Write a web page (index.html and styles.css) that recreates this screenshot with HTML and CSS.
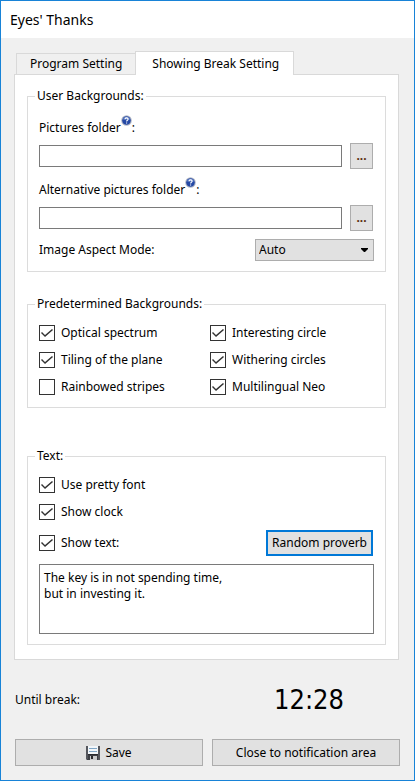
FILE: index.html
```html
<!DOCTYPE html>
<html lang="en">
<head>
<meta charset="utf-8">
<meta name="viewport" content="width=device-width, initial-scale=1">
<title>Eyes' Thanks</title>
<link rel="stylesheet" href="styles.css">
</head>
<body>
<div class="window">
  <header class="titlebar"><h1 class="title">Eyes' Thanks</h1></header>
  <main class="content">
    <div class="tabs" role="tablist">
      <button class="tab" type="button" role="tab" aria-selected="false">Program Setting</button>
      <button class="tab tab-active" type="button" role="tab" aria-selected="true">Showing Break Setting</button>
    </div>
    <form class="panel" role="tabpanel">
      <fieldset class="group group-folders">
        <legend>User Backgrounds:</legend>
        <label class="field-label" for="pictures">Pictures folder<svg class="help" viewBox="0 0 11 11" aria-hidden="true"><circle cx="5.5" cy="5.5" r="5.3" fill="#b4b9c6"/><circle cx="5.5" cy="5.5" r="4.3" fill="#2549a5"/><path d="M2 4.5a3.6 3.6 0 0 1 7 0Z" fill="#6685ca"/><path d="M4 4.2c.1-1.8 3.2-1.7 3.1 0 0 1-1.5 1.2-1.5 2.3M5.6 7.4v1.1" fill="none" stroke="#fff" stroke-width="1.1"/></svg>:</label>
        <div class="path-row">
          <input class="path" id="pictures" type="text">
          <button class="button browse" type="button">...</button>
        </div>
        <label class="field-label field-label-next" for="alternative">Alternative pictures folder<svg class="help" viewBox="0 0 11 11" aria-hidden="true"><circle cx="5.5" cy="5.5" r="5.3" fill="#b4b9c6"/><circle cx="5.5" cy="5.5" r="4.3" fill="#2549a5"/><path d="M2 4.5a3.6 3.6 0 0 1 7 0Z" fill="#6685ca"/><path d="M4 4.2c.1-1.8 3.2-1.7 3.1 0 0 1-1.5 1.2-1.5 2.3M5.6 7.4v1.1" fill="none" stroke="#fff" stroke-width="1.1"/></svg>:</label>
        <div class="path-row">
          <input class="path" id="alternative" type="text">
          <button class="button browse" type="button">...</button>
        </div>
        <div class="mode-row">
          <label for="mode">Image Aspect Mode:</label>
          <div class="select-wrap">
            <select class="select" id="mode"><option>Auto</option></select>
            <svg class="arrow" viewBox="0 0 7 4" aria-hidden="true"><path d="M0 0h7v1L4 4H3L0 1Z"/></svg>
          </div>
        </div>
      </fieldset>

      <fieldset class="group group-checks">
        <legend>Predetermined Backgrounds:</legend>
        <div class="checks">
          <label class="check"><input type="checkbox" checked>Optical spectrum</label>
          <label class="check"><input type="checkbox" checked>Interesting circle</label>
          <label class="check"><input type="checkbox" checked>Tiling of the plane</label>
          <label class="check"><input type="checkbox" checked>Withering circles</label>
          <label class="check"><input type="checkbox">Rainbowed stripes</label>
          <label class="check"><input type="checkbox" checked>Multilingual Neo</label>
        </div>
      </fieldset>

      <fieldset class="group group-text">
        <legend>Text:</legend>
        <div class="options">
          <label class="check"><input type="checkbox" checked>Use pretty font</label>
          <label class="check"><input type="checkbox" checked>Show clock</label>
        </div>
        <div class="proverb-row">
          <label class="check"><input type="checkbox" checked>Show text:</label>
          <button class="button button-default" type="button">Random proverb</button>
        </div>
        <textarea class="proverb" aria-label="Text">The key is in not spending time,
but in investing it.</textarea>
      </fieldset>
    </form>

    <footer class="footer">
      <span class="until">Until break:</span>
      <output class="clock">12:28</output>
      <button class="button action" type="button"><svg class="disk" viewBox="0 0 14 14" aria-hidden="true"><path d="M0 0h14v14H1L0 13Z" fill="#3d3f45"/><path d="M0 0h2v13H0ZM12 0h2v14h-2Z" fill="#55575d"/><path d="M2 0h10v8H2Z" fill="#f2f6fa"/><path d="M3 2h8v1H3ZM3 5h8v1H3Z" fill="#7fa6c6"/><path d="M2 8h10v1H2Z" fill="#2a2b2f"/><path d="M4 10h7v4H4Z" fill="#c9cacc"/><path d="M5 10h2v3H5Z" fill="#292a2e"/></svg>Save</button>
      <button class="button action" type="button">Close to notification area</button>
    </footer>
  </main>
</div>
</body>
</html>
```
FILE: styles.css
```css
* {
  box-sizing: border-box;
}

body {
  margin: 0;
  background: #f0f0f0;
  color: #000;
  font: 12px/16px "Noto Sans", sans-serif;
}

button,
input,
select,
textarea {
  margin: 0;
  color: inherit;
  font: inherit;
  border-radius: 0;
}

.window {
  min-height: 100vh;
  border: 1px solid #1883d7;
}

.titlebar {
  padding: 8px 9px;
  background: #fff;
}

.title {
  margin: 0;
  font: 14px/21px "Noto Sans", sans-serif;
}

.content {
  padding: 13px 15px 14px 13px;
}

.tabs {
  display: flex;
  align-items: flex-end;
  padding-left: 2px;
}

.tab {
  height: 21px;
  padding: 0 13px;
  border: 1px solid #d9d9d9;
  border-width: 1px 0 0 1px;
  background: #f0f0f0;
}

.tab-active {
  position: relative;
  height: 24px;
  margin-bottom: -1px;
  padding: 0 14px 0 16px;
  border-width: 1px 1px 0;
  background: #fff;
}

.panel {
  padding: 13px 12px 14px;
  border: 1px solid #d9d9d9;
  background: #fff;
}

.group {
  min-width: 0;
  margin: 0;
  padding: 0 11px 10px;
  border: 1px solid #dcdcdc;
}

.group legend {
  margin-left: -4px;
  padding: 0 2px;
}

.group-folders {
  padding-top: 16px;
}

.group-checks {
  margin-top: 24px;
  padding-top: 13px;
  padding-bottom: 12px;
}

.group-text {
  margin-top: 40px;
  padding-top: 13px;
}

.field-label {
  display: flex;
  height: 16px;
  margin-bottom: 7px;
}

.field-label-next {
  margin-top: 13px;
}

.help {
  width: 11px;
  height: 11px;
  margin-top: -5px;
}

.path-row {
  display: flex;
  align-items: center;
  gap: 8px;
}

.path {
  flex: 1;
  min-width: 0;
  height: 22px;
  padding: 0 4px;
  border: 1px solid #7a7a7a;
  background: #fff;
}

.button {
  height: 26px;
  padding: 0 5px;
  border: 1px solid #adadad;
  background: #e1e1e1;
}

.browse {
  width: 23px;
  margin-right: 1px;
  padding: 0;
  color: #5a2d0c;
  font-weight: bold;
}

.mode-row {
  display: flex;
  align-items: center;
  justify-content: space-between;
  margin-top: 8px;
}

.select-wrap {
  position: relative;
  width: 119px;
}

.select {
  display: block;
  appearance: none;
  width: 100%;
  height: 22px;
  padding: 0 20px 0 3px;
  border: 1px solid #adadad;
  background: #e1e1e1;
}

.arrow {
  position: absolute;
  top: 9px;
  right: 6px;
  width: 7px;
  height: 4px;
  pointer-events: none;
}

.checks {
  display: grid;
  grid-template-columns: 171px 1fr;
  row-gap: 11px;
}

.options {
  display: grid;
  row-gap: 11px;
}

.check {
  display: flex;
  align-items: center;
  gap: 6px;
}

.check input {
  appearance: none;
  width: 16px;
  height: 16px;
  border: 1px solid #333;
  background: #fff;
}

.check input:checked::before {
  content: "";
  display: block;
  width: 14px;
  height: 14px;
  background: #333;
  clip-path: polygon(1px 7px, 2px 6px, 5px 9px, 12px 3px, 13px 4px, 5px 11px);
}

.proverb-row {
  display: flex;
  align-items: center;
  justify-content: space-between;
  margin: 10px 1px 8px 0;
}

.button-default {
  padding: 0 4px;
  border: 2px solid #0078d7;
}

.proverb {
  display: block;
  width: 100%;
  height: 70px;
  padding: 5px 4px;
  border: 1px solid #7a7a7a;
  background: #fff;
  resize: none;
}

.footer {
  display: grid;
  grid-template-columns: 1fr 1fr;
  gap: 23px 9px;
  align-items: center;
  margin: 24px -1px 0 1px;
}

.clock {
  padding-left: 6px;
  font-family: "DejaVu Sans Condensed", "DejaVu Sans", sans-serif;
  font-size: 27px;
  line-height: 32px;
  text-align: center;
}

.action {
  display: flex;
  align-items: center;
  justify-content: center;
  gap: 5px;
  height: 27px;
}

.disk {
  width: 14px;
  height: 14px;
}
```
